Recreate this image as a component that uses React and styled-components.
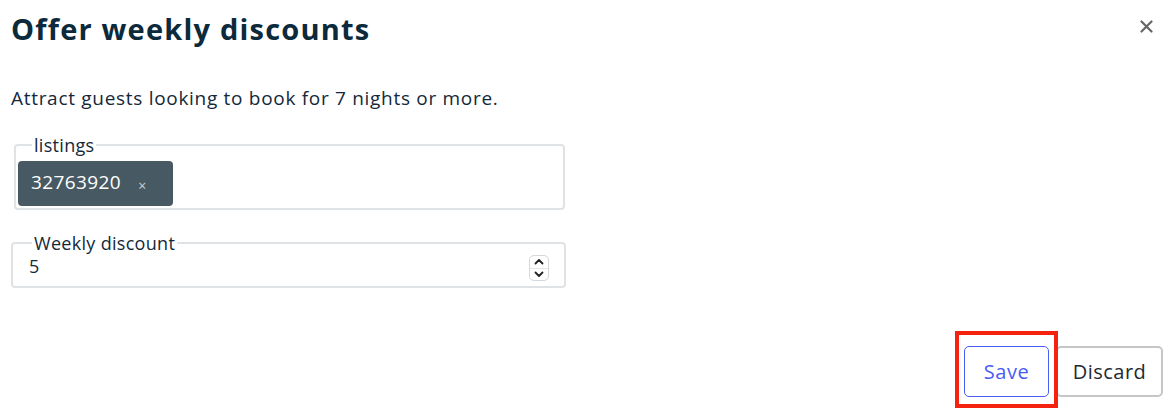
import React from "react";
import styled, { createGlobalStyle } from "styled-components";

const Global = createGlobalStyle`
  html, body { margin: 0; padding: 0; background: #ffffff; }
  body { font-family: "Open Sans", "Liberation Sans", Arial, sans-serif; color: #13293a; }
  * { box-sizing: border-box; }
`;

const Page = styled.div`
  width: 1166px;
  height: 414px;
  padding: 0 3px 0 11px;
  display: flex;
  flex-direction: column;
  overflow: hidden;
`;

const Header = styled.div`
  display: flex;
  align-items: flex-start;
  justify-content: space-between;
  padding-top: 10px;
  height: 60px;
`;

const Title = styled.h1`
  margin: 0;
  font-size: 29px;
  line-height: 38px;
  font-weight: 700;
  color: #0c2a3b;
  letter-spacing: 1.2px;
`;

const CloseButton = styled.button`
  border: 0;
  background: transparent;
  padding: 0;
  margin: 9px 10px 0 0;
  width: 14px;
  height: 14px;
  display: flex;
  align-items: center;
  justify-content: center;
  cursor: pointer;
`;

const Intro = styled.p`
  margin: 25px 0 0;
  font-size: 19px;
  line-height: 26px;
  letter-spacing: 0.7px;
  color: #13293a;
`;

const Field = styled.fieldset`
  margin: ${(p) => p.$mt}px 0 0 ${(p) => p.$ml}px;
  width: ${(p) => p.$w}px;
  height: ${(p) => p.$h}px;
  border: 2px solid #e0e3e6;
  border-radius: 4px;
  padding: 0 ${(p) => p.$pr}px 0 ${(p) => p.$pl}px;
  display: flex;
  align-items: ${(p) => p.$align || "center"};
  min-width: 0;
`;

const Legend = styled.legend`
  margin-left: ${(p) => p.$ml}px;
  padding: 0 2px;
  font-size: 18px;
  line-height: 20px;
  letter-spacing: 0.3px;
  color: #13293a;
`;

const Chip = styled.div`
  margin-top: 6px;
  width: 155px;
  height: 45px;
  background: #475a63;
  border-radius: 4px;
  color: #ffffff;
  display: flex;
  align-items: center;
  padding: 0 0 4px 13px;
  font-size: 19px;
  letter-spacing: 0.4px;
`;

const ChipRemove = styled.span`
  margin-left: 17px;
  margin-top: 8px;
  font-size: 14px;
  letter-spacing: 0;
  color: #c9d0d4;
`;

const NumberInput = styled.input`
  flex: 1;
  border: 0;
  outline: none;
  background: transparent;
  font: inherit;
  font-size: 18px;
  color: #13293a;
  padding: 0;
  margin-top: -2px;
`;

const Spinner = styled.div`
  width: 20px;
  height: 26px;
  border: 1px solid #d5d8db;
  border-radius: 5px;
  display: flex;
  flex-direction: column;
  margin-top: 2px;
`;

const SpinHalf = styled.div`
  flex: 1;
  display: flex;
  align-items: center;
  justify-content: center;
  & + & { border-top: 1px solid #e3e5e8; }
`;

const Footer = styled.div`
  margin-top: auto;
  margin-bottom: 17px;
  display: flex;
  justify-content: flex-end;
  gap: 7px;
`;

const Highlight = styled.div`
  position: relative;
  display: flex;
  &::after {
    content: "";
    position: absolute;
    left: -9px;
    right: -9px;
    top: -15px;
    bottom: -11px;
    border: 4px solid #f5220f;
    pointer-events: none;
  }
`;

const Button = styled.button`
  height: 51px;
  padding: 0;
  width: ${(p) => (p.$primary ? 85 : 107)}px;
  border: ${(p) => (p.$primary ? "1.5px solid #4a5cf4" : "2px solid #c4c6c8")};
  border-radius: 5px;
  background: #ffffff;
  color: ${(p) => (p.$primary ? "#4a5cf4" : "#222a30")};
  font-family: inherit;
  font-size: 20px;
  letter-spacing: 0.5px;
  cursor: pointer;
`;

const Chevron = ({ up }) => (
  <svg width="10" height="7" viewBox="0 0 10 7">
    <path
      d={up ? "M1.5 5.5 L5 2 L8.5 5.5" : "M1.5 1.5 L5 5 L8.5 1.5"}
      fill="none"
      stroke="#222"
      strokeWidth="1.8"
      strokeLinecap="round"
      strokeLinejoin="round"
    />
  </svg>
);

export default function App() {
  return (
    <>
      <Global />
      <Page>
        <Header>
          <Title>Offer weekly discounts</Title>
          <CloseButton aria-label="Close">
            <svg width="13" height="13" viewBox="0 0 13 13">
              <path d="M1.5 1.5 L11.5 11.5 M11.5 1.5 L1.5 11.5" stroke="#666" strokeWidth="2.2" strokeLinecap="round" />
            </svg>
          </CloseButton>
        </Header>
        <Intro>Attract guests looking to book for 7 nights or more.</Intro>
        <Field $mt={24} $ml={3} $w={551} $h={75} $pl={2} $pr={2} $align="flex-start">
          <Legend $ml={14}>listings</Legend>
          <Chip>
            32763920
            <ChipRemove>×</ChipRemove>
          </Chip>
        </Field>
        <Field $mt={23} $ml={0} $w={555} $h={55} $pl={16} $pr={15}>
          <Legend $ml={3}>Weekly discount</Legend>
          <NumberInput defaultValue="5" />
          <Spinner>
            <SpinHalf><Chevron up /></SpinHalf>
            <SpinHalf><Chevron /></SpinHalf>
          </Spinner>
        </Field>
        <Footer>
          <Highlight>
            <Button $primary>Save</Button>
          </Highlight>
          <Button>Discard</Button>
        </Footer>
      </Page>
    </>
  );
}
